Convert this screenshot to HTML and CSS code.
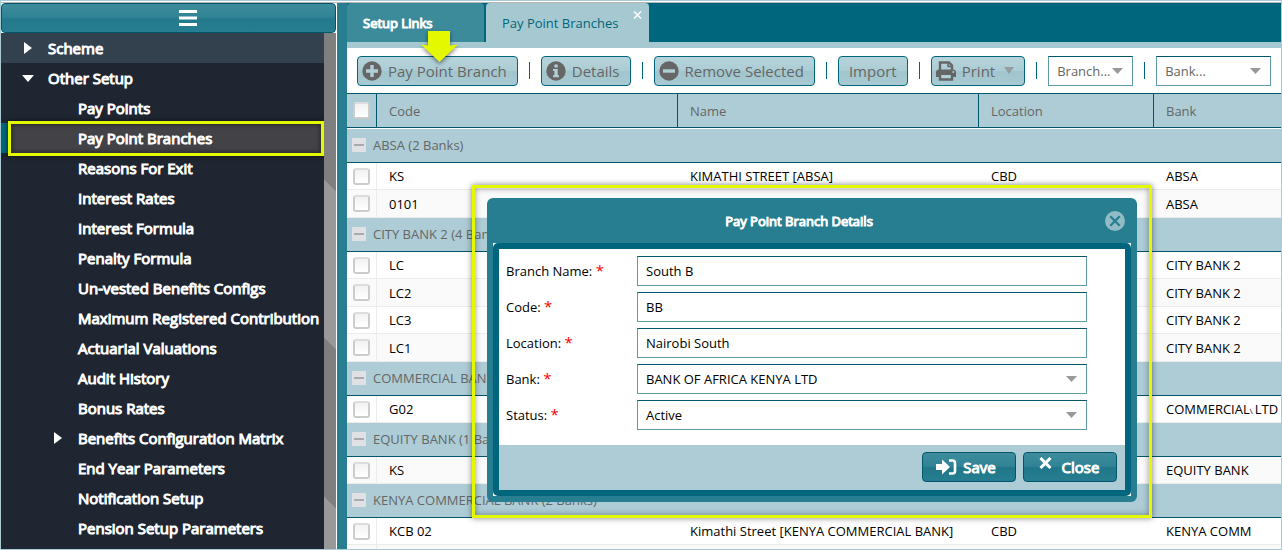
FILE: index.html
```
<!DOCTYPE html>
<html lang="en">
<head>
    <meta charset="UTF-8">
    <meta name="viewport" content="width=device-width, initial-scale=1.0">
    <title>Pay Point Branches</title>
    <link rel="stylesheet" href="styles.css">
</head>
<body>

    <div class="app">

        <!-- Sidebar -->
        <aside class="sidebar">
            <button type="button" class="menu-toggle" aria-label="Toggle menu">
                <svg width="18" height="16" viewBox="0 0 18 16"><path d="M0 0h18v3H0zM0 6.500h18v3H0zM0 13h18v3H0z" fill="#fff"/></svg>
            </button>
            <div class="sidebar-body">
                <nav class="menu">
                    <ul>
                        <li><a href="#" class="top closed shaded"><i class="caret"></i>Scheme</a></li>
                        <li><a href="#" class="top open"><i class="caret"></i>Other Setup</a>
                            <ul>
                                <li><a href="#">Pay Points</a></li>
                                <li class="current"><a href="#">Pay Point Branches</a></li>
                                <li><a href="#">Reasons For Exit</a></li>
                                <li><a href="#">Interest Rates</a></li>
                                <li><a href="#">Interest Formula</a></li>
                                <li><a href="#">Penalty Formula</a></li>
                                <li><a href="#">Un-vested Benefits Configs</a></li>
                                <li><a href="#">Maximum Registered Contribution</a></li>
                                <li><a href="#">Actuarial Valuations</a></li>
                                <li><a href="#">Audit History</a></li>
                                <li><a href="#">Bonus Rates</a></li>
                                <li><a href="#" class="closed"><i class="caret"></i>Benefits Configuration Matrix</a></li>
                                <li><a href="#">End Year Parameters</a></li>
                                <li><a href="#">Notification Setup</a></li>
                                <li><a href="#">Pension Setup Parameters</a></li>
                            </ul>
                        </li>
                    </ul>
                </nav>
                <div class="scroll-strip"></div>
            </div>
        </aside>

        <div class="splitter"></div>

        <!-- Main panel -->
        <main class="main">
            <div class="tabs">
                <button type="button" class="tab">Setup Links</button>
                <div class="tab active">
                    <span>Pay Point Branches</span>
                    <button type="button" class="tab-close" aria-label="Close tab">
                        <svg width="9" height="10" viewBox="0 0 9 10"><path d="M1 1.5l7 7M8 1.5l-7 7" stroke="#fff" stroke-width="1.5"/></svg>
                    </button>
                </div>
            </div>

            <div class="toolbar">
                <button type="button" class="tool">
                    <svg width="20" height="20" viewBox="0 0 20 20"><circle cx="10" cy="10" r="9.7" fill="#666"/><path d="M8.3 4h3.4v4.3H16v3.4h-4.3V16H8.3v-4.3H4V8.3h4.3z" fill="#b0cfd7"/></svg>
                    Pay Point Branch
                </button>
                <span class="sep"></span>
                <button type="button" class="tool">
                    <svg width="20" height="20" viewBox="0 0 20 20"><circle cx="10" cy="10" r="9.7" fill="#666"/><path d="M8.4 3.6h3.3v3H8.4zM7 8h4.7v6.2H13v2H7v-2h1.4V10H7z" fill="#b0cfd7"/></svg>
                    Details
                </button>
                <span class="sep"></span>
                <button type="button" class="tool">
                    <svg width="20" height="20" viewBox="0 0 20 20"><circle cx="10" cy="10" r="9.7" fill="#666"/><path d="M4 8.3h12v3.4H4z" fill="#b0cfd7"/></svg>
                    Remove Selected
                </button>
                <span class="sep"></span>
                <button type="button" class="tool plain">Import</button>
                <span class="sep"></span>
                <button type="button" class="tool">
                    <svg width="20" height="20" viewBox="0 0 20 20"><path d="M4 9V1.5h9l3 3V9" fill="none" stroke="#666" stroke-width="2.4"/><path d="M12 1v4.5h4" fill="none" stroke="#666" stroke-width="1.5"/><path d="M3 8.5h14q3 0 3 3V16h-3.5v-2.5h-13V16H0v-4.5q0-3 3-3z" fill="#666"/><path d="M4 12.7h12v5.8H4z" fill="#b0cfd7" stroke="#666" stroke-width="2.4"/><circle cx="17.3" cy="11" r="1" fill="#b0cfd7"/></svg>
                    Print
                    <i class="drop"></i>
                </button>
                <span class="sep"></span>
                <select class="filter branch" aria-label="Branch"><option>Branch...</option></select>
                <span class="sep"></span>
                <select class="filter bank" aria-label="Bank"><option>Bank...</option></select>
            </div>

            <table class="grid">
                <colgroup>
                    <col class="col-check">
                    <col class="col-code">
                    <col class="col-name">
                    <col class="col-location">
                    <col>
                </colgroup>
                <thead>
                    <tr>
                        <th><input type="checkbox" aria-label="Select all"></th>
                        <th>Code</th>
                        <th>Name</th>
                        <th>Location</th>
                        <th>Bank</th>
                    </tr>
                </thead>
                <tbody>
                    <tr class="group"><td colspan="5"><div><i class="minus"></i>ABSA (2 Banks)</div></td></tr>
                    <tr><td><input type="checkbox" aria-label="Select KS"></td><td>KS</td><td>KIMATHI STREET [ABSA]</td><td>CBD</td><td>ABSA</td></tr>
                    <tr class="alt"><td><input type="checkbox" aria-label="Select 0101"></td><td>0101</td><td></td><td></td><td>ABSA</td></tr>
                </tbody>
                <tbody>
                    <tr class="group"><td colspan="5"><div><i class="minus"></i>CITY BANK 2 (4 Banks)</div></td></tr>
                    <tr><td><input type="checkbox" aria-label="Select LC"></td><td>LC</td><td></td><td></td><td>CITY BANK 2</td></tr>
                    <tr class="alt"><td><input type="checkbox" aria-label="Select LC2"></td><td>LC2</td><td></td><td></td><td>CITY BANK 2</td></tr>
                    <tr><td><input type="checkbox" aria-label="Select LC3"></td><td>LC3</td><td></td><td></td><td>CITY BANK 2</td></tr>
                    <tr class="alt"><td><input type="checkbox" aria-label="Select LC1"></td><td>LC1</td><td></td><td></td><td>CITY BANK 2</td></tr>
                </tbody>
                <tbody>
                    <tr class="group"><td colspan="5"><div><i class="minus"></i>COMMERCIAL BANK</div></td></tr>
                    <tr><td><input type="checkbox" aria-label="Select G02"></td><td>G02</td><td></td><td></td><td>COMMERCIAL<small>\ </small>LTD</td></tr>
                </tbody>
                <tbody>
                    <tr class="group"><td colspan="5"><div><i class="minus"></i>EQUITY BANK (1 Banks)</div></td></tr>
                    <tr class="alt"><td><input type="checkbox" aria-label="Select KS"></td><td>KS</td><td></td><td></td><td>EQUITY BANK</td></tr>
                </tbody>
                <tbody>
                    <tr class="group"><td colspan="5"><div><i class="minus"></i>KENYA COMMERCIAL BANK (2 Banks)</div></td></tr>
                    <tr><td><input type="checkbox" aria-label="Select KCB 02"></td><td>KCB 02</td><td>Kimathi Street [KENYA COMMERCIAL BANK]</td><td>CBD</td><td>KENYA COMM</td></tr>
                    <tr class="alt"><td></td><td></td><td></td><td></td><td></td></tr>
                </tbody>
            </table>
        </main>
    </div>

    <!-- Branch details dialog -->
    <div class="highlight">
        <form class="dialog" role="dialog" aria-labelledby="dialogTitle">
            <div class="dialog-header">
                <h2 id="dialogTitle">Pay Point Branch Details</h2>
                <button type="button" class="dialog-close" aria-label="Close dialog">
                    <svg width="20" height="20" viewBox="0 0 20 20"><circle cx="10" cy="10" r="10" fill="#91bbc5"/><path d="M5.3 5.3l9.4 9.4M14.7 5.3l-9.4 9.4" stroke="#267e90" stroke-width="2.3"/></svg>
                </button>
            </div>
            <div class="dialog-frame">
                <div class="dialog-content">
                    <div class="fields">
                        <label for="branchName">Branch Name: <span>*</span></label>
                        <input type="text" id="branchName" value="South B">
                        <label for="code">Code: <span>*</span></label>
                        <input type="text" id="code" value="BB">
                        <label for="location">Location: <span>*</span></label>
                        <input type="text" id="location" value="Nairobi South">
                        <label for="bank">Bank: <span>*</span></label>
                        <select id="bank"><option>BANK OF AFRICA KENYA LTD</option></select>
                        <label for="status">Status: <span>*</span></label>
                        <select id="status"><option>Active</option></select>
                    </div>
                    <div class="dialog-footer">
                        <button type="button" class="action">
                            <svg width="21" height="16" viewBox="0 0 21 16"><path d="M0 5h6V0.5L14 8l-8 7.5V11H0z" fill="#fff"/><path d="M13 1.5h3.500q2.500 0 2.500 2.500v8q0 2.500-2.500 2.500H13" fill="none" stroke="#fff" stroke-width="2.6"/></svg>
                            Save
                        </button>
                        <button type="button" class="action">
                            <svg class="raised" width="13" height="12" viewBox="0 0 13 12"><path d="M1.5 1l10 10M11.5 1l-10 10" stroke="#fff" stroke-width="3"/></svg>
                            Close
                        </button>
                    </div>
                </div>
            </div>
        </form>
    </div>

    <!-- Pointer above the add button -->
    <svg class="pointer" width="40" height="34" viewBox="0 0 40 34"><path d="M9 0h22v14.500l8-1L20.500 31 2 13.500l7 1z" fill="#e4f900"/></svg>

</body>
</html>
```
FILE: styles.css
```
* {
    box-sizing: border-box;
}

body {
    margin: 0;
    height: 100vh;
    overflow: hidden;
    position: relative;
    font-family: "Open Sans", Arial, sans-serif;
    font-size: 13px;
    color: #000;
    border: 1px solid #aacbd4;
    background-color: #fff;
}

button,
input,
select {
    font-family: inherit;
    margin: 0;
}

ul {
    list-style: none;
    margin: 0;
    padding: 0;
}

.app {
    display: flex;
    height: 100%;
    padding-top: 2px;
    box-shadow: inset 0 1px 0 #fff, inset 0 2px 0 #b8b4b8;
}

/* Sidebar */
.sidebar {
    width: 336px;
    flex-shrink: 0;
    display: flex;
    flex-direction: column;
    border-right: 1px solid #fff;
}

.menu-toggle {
    height: 30px;
    flex-shrink: 0;
    display: flex;
    align-items: center;
    justify-content: center;
    padding: 0 0 0 38px;
    border: 1px solid #00566b;
    border-radius: 4px;
    background-image: linear-gradient(#3f8c9c, #2f8395 48%, #24798c 52%, #267e90);
}

.sidebar-body {
    flex: 1;
    display: flex;
    min-height: 0;
}

.menu {
    flex: 1;
    overflow: hidden;
    background-color: #1f2631;
}

.menu a {
    display: flex;
    align-items: center;
    height: 30px;
    padding-left: 77px;
    color: #fff;
    font-size: 15px;
    text-decoration: none;
    white-space: nowrap;
    -webkit-text-stroke: 1px #fff;
}

.menu a.closed {
    padding-left: 51px;
}

.menu a.top {
    padding-left: 21px;
}

.menu a.shaded {
    background-color: #33414f;
}

.caret {
    width: 26px;
    flex-shrink: 0;
}

.caret::before {
    content: "";
    display: block;
    width: 0;
    border: 6px solid transparent;
}

.closed .caret::before {
    margin-left: 2px;
    border-left: 8px solid #fff;
    border-right: 0;
}

.open .caret::before {
    border-top: 7px solid #fff;
    border-bottom: 0;
}

.menu .current {
    position: relative;
    background-color: #434347;
    border-left: 7px solid #00667d;
}

.menu .current a {
    padding-left: 70px;
}

.menu .current::after {
    content: "";
    position: absolute;
    top: -2px;
    bottom: -3px;
    left: 0;
    right: 0;
    border: 3px solid #e4f900;
    box-shadow: 0 0 5px rgba(0, 0, 0, 0.6), inset 0 0 5px rgba(0, 0, 0, 0.6);
}

.scroll-strip {
    width: 12px;
    background-image: repeating-linear-gradient(225deg, #7f7f7f 0 112px, #999 112px 224px);
}

.splitter {
    width: 10px;
    flex-shrink: 0;
    background-color: #267e90;
}

/* Tabs */
.main {
    flex: 1;
    min-width: 0;
    overflow: hidden;
}

.tabs {
    display: flex;
    gap: 2px;
    height: 45px;
    background-color: #00667d;
    border-bottom: 6px solid #a6c9d1;
}

.tab {
    width: 137px;
    padding: 0 16px;
    border: 0;
    border-radius: 4px 4px 0 0;
    background-color: #3c8b9b;
    color: #fff;
    font-size: 13px;
    text-align: left;
    -webkit-text-stroke: 1px #fff;
}

.tab.active {
    width: 163px;
    display: flex;
    align-items: center;
    justify-content: space-between;
    padding-right: 7px;
    background-color: #a6c9d1;
    color: #00667d;
    -webkit-text-stroke: 0;
}

.tab-close {
    align-self: flex-start;
    padding: 7px 0;
    border: 0;
    background: none;
    line-height: 0;
}

/* Toolbar */
.toolbar {
    display: flex;
    align-items: center;
    gap: 11px;
    height: 45px;
    padding: 0 10px;
}

.tool {
    display: flex;
    align-items: center;
    flex-shrink: 0;
    gap: 6px;
    height: 30px;
    padding: 0 10px 0 4px;
    border: 1px solid #00667d;
    border-radius: 4px;
    background-image: linear-gradient(#b6d3da, #accdd5 48%, #a2c5cd 52%, #a8cad2);
    color: #666;
    font-size: 15px;
    white-space: nowrap;
    -webkit-text-stroke: thin #666;
    -webkit-text-stroke-width: 0;
}

.tool.plain {
    padding: 0 10px;
}

.drop {
    margin-left: 3px;
    border: 5px solid transparent;
    border-top: 7px solid #949c9f;
    border-bottom: 0;
}

.sep {
    width: 1px;
    height: 17px;
    flex-shrink: 0;
    background-color: #00667d;
}

select {
    appearance: none;
    background: #fff url("data:image/svg+xml,%3Csvg xmlns='http://www.w3.org/2000/svg' width='11' height='6'%3E%3Cpath d='M0 0h11L5.5 6z' fill='%23999'/%3E%3C/svg%3E") no-repeat right 9px center;
}

.filter,
.fields input,
.fields select {
    height: 30px;
    padding: 0 8px;
    border: 1px solid #5f9ba5;
    border-top-color: #00566b;
    border-radius: 0;
    color: #000;
    font-size: 13px;
}

.toolbar .filter {
    color: #666;
}

.filter.branch {
    width: 85px;
}

.filter.bank {
    flex: 1;
    min-width: 0;
}

/* Grid */
.grid {
    width: 100%;
    table-layout: fixed;
    border-collapse: separate;
    border-spacing: 0;
    white-space: nowrap;
}

.col-check {
    width: 30px;
}

.col-code,
.col-name {
    width: 301px;
}

.col-location {
    width: 175px;
}

.grid th {
    height: 35px;
    padding: 0 0 0 12px;
    border: solid #00566b;
    border-width: 1px 1px 1px 0;
    background-color: #adccd5;
    color: #666;
    font-weight: normal;
    text-align: left;
}

.grid th:last-child {
    border-right: 0;
}

.grid td {
    height: 27px;
    padding: 0 0 0 12px;
    border-bottom: 1px solid #ececec;
}

.grid tr:nth-child(odd) td {
    height: 28px;
}

.grid tr th:first-child,
.grid tr td:first-child {
    padding-left: 6px;
}

.grid td:first-child {
    border-right: 1px solid #ececec;
}

.grid .alt td {
    background-color: #fafafa;
}

.grid tr.group td {
    height: 34px;
    padding-left: 5px;
    padding-bottom: 1px;
    border-right: 0;
    border-bottom: 1px solid #00566b;
    background-color: #adccd5;
    color: #666;
}

.grid thead + tbody .group td {
    height: 35px;
    border-top: 1px solid #fff;
}

.group div {
    display: flex;
    align-items: center;
    gap: 7px;
}

.grid small {
    font-size: 8px;
}

.minus {
    width: 14px;
    height: 14px;
    padding: 6px 2px;
    background-color: #dfe1e5;
}

.minus::before {
    content: "";
    display: block;
    height: 2px;
    background-color: #aaa;
}

input[type="checkbox"] {
    appearance: none;
    display: block;
    width: 17px;
    height: 17px;
    border: 2px solid #ccc;
    border-top-color: #ddd;
    border-radius: 3px;
    background-image: linear-gradient(#f2f2f2, #fff);
}

/* Dialog */
.highlight {
    position: absolute;
    top: 184px;
    left: 471px;
    width: 680px;
    padding: 10px 12px 13px;
    border: 3px solid #e4f900;
    box-shadow: 0 0 6px rgba(0, 0, 0, 0.5), inset 0 0 6px rgba(0, 0, 0, 0.4);
}

.dialog {
    padding: 0 6px 6px;
    border-radius: 6px;
    background-color: #267e90;
}

.dialog-header {
    display: flex;
    align-items: center;
    height: 45px;
    padding-right: 6px;
}

.dialog-header h2 {
    flex: 1;
    margin: 0;
    color: #fff;
    font-size: 13px;
    font-weight: normal;
    text-align: center;
    -webkit-text-stroke: 1px #fff;
}

.dialog-close {
    padding: 0;
    border: 0;
    background: none;
    line-height: 0;
}

.dialog-frame {
    background-color: #fff;
}

.dialog-content {
    border: 6px solid #00667d;
    border-radius: 5px;
}

.fields {
    display: grid;
    grid-template-columns: 131px 1fr;
    gap: 6px 0;
    align-items: center;
    padding: 7px 38px 15px 7px;
}

.fields span {
    color: #f00;
    font-size: 15px;
    line-height: 1;
}

.dialog-footer {
    display: flex;
    align-items: center;
    justify-content: flex-end;
    gap: 7px;
    height: 45px;
    padding: 0 8px 1px 0;
    background-color: #adccd5;
}

.action {
    display: flex;
    align-items: center;
    justify-content: center;
    gap: 6px;
    width: 94px;
    height: 30px;
    padding: 0 6px 0 0;
    border: 1px solid #00566b;
    border-radius: 4px;
    background-image: linear-gradient(#3f8c9c, #2f8395 48%, #20778a 52%, #267e90);
    color: #fff;
    font-size: 15px;
    -webkit-text-stroke: 1px #fff;
}

.action .raised {
    margin: 0 4px 8px 4px;
}

.pointer {
    position: absolute;
    top: 30px;
    left: 418px;
    filter: drop-shadow(0 2px 2px rgba(0, 0, 0, 0.5));
}
```
